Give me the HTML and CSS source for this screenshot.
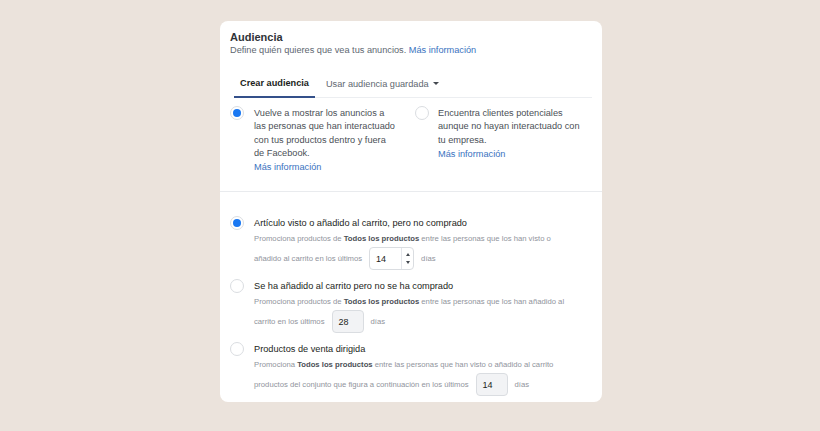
FILE: index.html
```html
<!DOCTYPE html>
<html lang="es">
<head>
<meta charset="utf-8">
<title>Audiencia</title>
<link rel="stylesheet" href="styles.css">
</head>
<body>
<div class="card">
  <div class="header">
    <div class="title">Audiencia</div>
    <div class="subtitle">Define quién quieres que vea tus anuncios. <a class="link">Más información</a></div>
  </div>
  <div class="tabs">
    <div class="tab active">Crear audiencia</div>
    <div class="tab">Usar audiencia guardada <span class="caret"></span></div>
  </div>
  <div class="choices">
    <div class="choice">
      <span class="radio checked"></span>
      <div class="choice-text">
        <p>Vuelve a mostrar los anuncios a las personas que han interactuado con tus productos dentro y fuera de Facebook.</p>
        <a class="link">Más información</a>
      </div>
    </div>
    <div class="choice choice-right">
      <span class="radio"></span>
      <div class="choice-text">
        <p>Encuentra clientes potenciales aunque no hayan interactuado con tu empresa.</p>
        <a class="link">Más información</a>
      </div>
    </div>
  </div>
  <div class="divider"></div>
  <div class="options">
    <div class="option">
      <span class="radio checked"></span>
      <div class="option-body">
        <div class="option-title">Artículo visto o añadido al carrito, pero no comprado</div>
        <div class="option-desc">Promociona productos de <b>Todos los productos</b> entre las personas que los han visto o</div>
        <div class="option-line">añadido al carrito en los últimos
          <span class="num active-num"><span class="num-val">14</span><span class="spin"><span class="up"></span><span class="down"></span></span></span>
          días</div>
      </div>
    </div>
    <div class="option">
      <span class="radio"></span>
      <div class="option-body">
        <div class="option-title">Se ha añadido al carrito pero no se ha comprado</div>
        <div class="option-desc">Promociona productos de <b>Todos los productos</b> entre las personas que los han añadido al</div>
        <div class="option-line">carrito en los últimos
          <span class="num"><span class="num-val">28</span></span>
          días</div>
      </div>
    </div>
    <div class="option">
      <span class="radio"></span>
      <div class="option-body">
        <div class="option-title">Productos de venta dirigida</div>
        <div class="option-desc">Promociona <b>Todos los productos</b> entre las personas que han visto o añadido al carrito</div>
        <div class="option-line">productos del conjunto que figura a continuación en los últimos
          <span class="num"><span class="num-val">14</span></span>
          días</div>
      </div>
    </div>
  </div>
</div>
</body>
</html>
```
FILE: styles.css
```css
html, body {
  margin: 0;
  padding: 0;
}
body {
  background: #ebe3dc;
  width: 820px;
  height: 431px;
  overflow: hidden;
  font-family: "Liberation Sans", Arial, sans-serif;
  color: #1c1e21;
}
.card {
  margin: 21px 0 0 220px;
  width: 382px;
  height: 381px;
  background: #fff;
  border-radius: 8px;
  box-sizing: border-box;
}
.link {
  color: #3a72c0;
  cursor: pointer;
}
.header {
  padding: 9px 10px 0 10px;
}
.title {
  font-size: 11px;
  line-height: 14px;
  font-weight: bold;
  color: #303338;
}
.subtitle {
  font-size: 9.2px;
  line-height: 12px;
  color: #606770;
}
.tabs {
  display: flex;
  margin: 20px 10px 0 14px;
  border-bottom: 1px solid #eceef1;
}
.tab {
  font-size: 9.2px;
  line-height: 12px;
  padding: 1px 6px 7px 6px;
  color: #606770;
  margin-right: 5px;
  display: flex;
  align-items: center;
  gap: 4px;
}
.tab.active {
  color: #1c1e21;
  font-weight: bold;
  border-bottom: 2px solid #34508a;
  margin-bottom: -1px;
}
.caret {
  width: 0;
  height: 0;
  border-left: 3px solid transparent;
  border-right: 3px solid transparent;
  border-top: 3px solid #444950;
}
.choices {
  display: flex;
  padding: 9px 10px 0 10px;
  height: 84px;
}
.choice {
  flex: none;
  display: flex;
  gap: 10px;
  width: 185px;
}
.choice-right {
  width: 170px;
  gap: 9px;
}
.choice-text {
  width: 142px;
}
.choice-text p {
  margin: 0;
  font-size: 9.2px;
  line-height: 13.3px;
  color: #4b4f56;
}
.choice-text .link {
  display: block;
  margin-top: 1px;
  font-size: 9.2px;
  line-height: 13px;
}
.radio {
  flex: none;
  width: 14px;
  height: 14px;
  border-radius: 50%;
  border: 1px solid #dadde1;
  box-sizing: border-box;
  background: #fff;
  position: relative;
  margin-top: -1px;
}
.radio.checked::after {
  content: "";
  position: absolute;
  left: 2px;
  top: 2px;
  width: 8px;
  height: 8px;
  border-radius: 50%;
  background: #1877f2;
}
.divider {
  height: 1px;
  background: #e9ebee;
}
.options {
  padding: 25px 10px 0 10px;
}
.option {
  display: flex;
  gap: 10px;
  margin-bottom: 10px;
}
.option-title {
  font-size: 9.2px;
  line-height: 12px;
  color: #1c1e21;
}
.option-desc {
  font-size: 7.7px;
  line-height: 10px;
  margin-top: 5px;
  color: #90949c;
}
.option-desc b {
  color: #4b4f56;
}
.option-line {
  font-size: 7.7px;
  color: #90949c;
  display: flex;
  align-items: center;
  gap: 7px;
  margin-top: 3px;
}
.num {
  display: inline-flex;
  align-items: stretch;
  width: 32px;
  height: 23px;
  box-sizing: border-box;
  border: 1px solid #dadde1;
  border-radius: 4px;
  background: #f2f3f5;
  font-size: 9px;
  color: #1c1e21;
}
.num-val {
  display: flex;
  align-items: center;
  padding-left: 6px;
  flex: 1;
}
.active-num {
  width: 45px;
  background: #fff;
}
.spin {
  width: 11px;
  border-left: 1px solid #e4e6eb;
  display: flex;
  flex-direction: column;
  align-items: center;
  justify-content: center;
  gap: 5px;
}
.up {
  width: 0; height: 0;
  border-left: 2.5px solid transparent;
  border-right: 2.5px solid transparent;
  border-bottom: 3px solid #444950;
}
.down {
  width: 0; height: 0;
  border-left: 2.5px solid transparent;
  border-right: 2.5px solid transparent;
  border-top: 3px solid #444950;
}
```
